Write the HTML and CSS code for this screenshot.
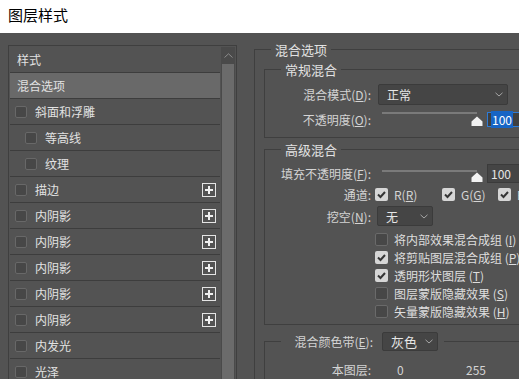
FILE: index.html
```html
<!DOCTYPE html>
<html>
    <head>
        <meta charset="utf-8">
        <title>图层样式</title>
        <link rel="stylesheet" href="styles.css">
    </head>
    <body>
        <div class="titlebar">图层样式</div>
        <div class="dialog">
            <!-- left: effect list -->
            <div class="stylelist">
                <div class="rows">
                    <div class="row head">样式</div>
                    <div class="row selected">混合选项</div>
                    <div class="row"><span class="box"></span>斜面和浮雕</div>
                    <div class="row sub"><span class="box"></span>等高线</div>
                    <div class="row sub"><span class="box"></span>纹理</div>
                    <div class="row"><span class="box"></span>描边<svg class="plus" width="14" height="14" viewBox="0 0 14 14"><rect x="0.5" y="0.5" width="13" height="13" fill="none" stroke="#e4e4e4"/><path d="M7 3v8M3 7h8" stroke="#f0f0f0" stroke-width="2"/></svg></div>
                    <div class="row"><span class="box"></span>内阴影<svg class="plus" width="14" height="14" viewBox="0 0 14 14"><rect x="0.5" y="0.5" width="13" height="13" fill="none" stroke="#e4e4e4"/><path d="M7 3v8M3 7h8" stroke="#f0f0f0" stroke-width="2"/></svg></div>
                    <div class="row"><span class="box"></span>内阴影<svg class="plus" width="14" height="14" viewBox="0 0 14 14"><rect x="0.5" y="0.5" width="13" height="13" fill="none" stroke="#e4e4e4"/><path d="M7 3v8M3 7h8" stroke="#f0f0f0" stroke-width="2"/></svg></div>
                    <div class="row"><span class="box"></span>内阴影<svg class="plus" width="14" height="14" viewBox="0 0 14 14"><rect x="0.5" y="0.5" width="13" height="13" fill="none" stroke="#e4e4e4"/><path d="M7 3v8M3 7h8" stroke="#f0f0f0" stroke-width="2"/></svg></div>
                    <div class="row"><span class="box"></span>内阴影<svg class="plus" width="14" height="14" viewBox="0 0 14 14"><rect x="0.5" y="0.5" width="13" height="13" fill="none" stroke="#e4e4e4"/><path d="M7 3v8M3 7h8" stroke="#f0f0f0" stroke-width="2"/></svg></div>
                    <div class="row"><span class="box"></span>内阴影<svg class="plus" width="14" height="14" viewBox="0 0 14 14"><rect x="0.5" y="0.5" width="13" height="13" fill="none" stroke="#e4e4e4"/><path d="M7 3v8M3 7h8" stroke="#f0f0f0" stroke-width="2"/></svg></div>
                    <div class="row"><span class="box"></span>内发光</div>
                    <div class="row"><span class="box"></span>光泽</div>
                    <div class="row"><span class="box"></span>颜色叠加</div>
                </div>
                <div class="scrollbar">
                    <div class="arrow"><svg width="9" height="5" viewBox="0 0 9 5"><path d="M0.5 4.5L4.5 0.8L8.5 4.5" fill="none" stroke="#8c8c8c"/></svg></div>
                    <div class="thumb"></div>
                </div>
            </div>

            <!-- right: blending options -->
            <fieldset class="group outer">
                <legend>混合选项</legend>

                <fieldset class="group inner normal">
                    <legend>常规混合</legend>
                    <div class="field mode">
                        <label>混合模式(<u>D</u>):</label>
                        <div class="select wide">正常<svg class="chev" width="8" height="5" viewBox="0 0 8 5"><path d="M0.5 0.8L4 4L7.5 0.8" fill="none" stroke="#a6a6a6"/></svg></div>
                    </div>
                    <div class="field opacity">
                        <label>不透明度(<u>O</u>):</label>
                        <div class="slider"><div class="track"></div><svg class="knob" width="12" height="10" viewBox="0 0 12 10"><path d="M6 0.5L11.5 5.5V10H0.5V5.5Z" fill="#f2f2f2"/></svg></div>
                        <div class="num focus"><span class="sel">100</span></div>
                    </div>
                </fieldset>

                <fieldset class="group inner advanced">
                    <legend>高级混合</legend>
                    <div class="field fill">
                        <label>填充不透明度(<u>F</u>):</label>
                        <div class="slider"><div class="track"></div><svg class="knob" width="12" height="10" viewBox="0 0 12 10"><path d="M6 0.5L11.5 5.5V10H0.5V5.5Z" fill="#f2f2f2"/></svg></div>
                        <div class="num">100</div>
                    </div>
                    <div class="field channels">
                        <label>通道:</label>
                        <div class="chan"><span class="check on"><svg width="13" height="13" viewBox="0 0 13 13"><path d="M3 6.5L5.5 9L10 4" fill="none" stroke="#353535" stroke-width="2"/></svg></span>R(<u>R</u>)</div>
                        <div class="chan"><span class="check on"><svg width="13" height="13" viewBox="0 0 13 13"><path d="M3 6.5L5.5 9L10 4" fill="none" stroke="#353535" stroke-width="2"/></svg></span>G(<u>G</u>)</div>
                        <div class="chan"><span class="check on"><svg width="13" height="13" viewBox="0 0 13 13"><path d="M3 6.5L5.5 9L10 4" fill="none" stroke="#353535" stroke-width="2"/></svg></span>B(<u>B</u>)</div>
                    </div>
                    <div class="field knockout">
                        <label>挖空(<u>N</u>):</label>
                        <div class="select small">无<svg class="chev" width="8" height="5" viewBox="0 0 8 5"><path d="M0.5 0.8L4 4L7.5 0.8" fill="none" stroke="#a6a6a6"/></svg></div>
                    </div>
                    <div class="checks">
                        <div class="opt"><span class="check"></span>将内部效果混合成组 (<u>I</u>)</div>
                        <div class="opt"><span class="check on"><svg width="13" height="13" viewBox="0 0 13 13"><path d="M3 6.5L5.5 9L10 4" fill="none" stroke="#353535" stroke-width="2"/></svg></span>将剪贴图层混合成组 (<u>P</u>)</div>
                        <div class="opt"><span class="check on"><svg width="13" height="13" viewBox="0 0 13 13"><path d="M3 6.5L5.5 9L10 4" fill="none" stroke="#353535" stroke-width="2"/></svg></span>透明形状图层 (<u>T</u>)</div>
                        <div class="opt"><span class="check"></span>图层蒙版隐藏效果 (<u>S</u>)</div>
                        <div class="opt"><span class="check"></span>矢量蒙版隐藏效果 (<u>H</u>)</div>
                    </div>
                </fieldset>

                <fieldset class="group inner band">
                    <legend class="bandlegend">
                        <label>混合颜色带(<u>E</u>):</label>
                        <div class="select tiny">灰色<svg class="chev" width="8" height="5" viewBox="0 0 8 5"><path d="M0.5 0.8L4 4L7.5 0.8" fill="none" stroke="#a6a6a6"/></svg></div>
                    </legend>
                    <div class="field layer">
                        <label>本图层:</label>
                        <span class="val first">0</span>
                        <span class="val">255</span>
                    </div>
                </fieldset>
            </fieldset>
        </div>
    </body>
</html>
```

FILE: styles.css
```css
body
{
    margin: 0;
    width: 519px;
    height: 379px;
    overflow: hidden;
    background-color: #535353;
    font-family: "Noto Sans CJK SC", "Microsoft YaHei", sans-serif;
    font-size: 12px;
    color: #d8d8d8;
}
.titlebar
{
    height: 33px;
    background-color: #ffffff;
    color: #000000;
    font-size: 15px;
    line-height: 30px;
    padding-left: 8px;
}
.dialog
{
    display: flex;
    align-items: flex-start;
    height: 346px;
    overflow: hidden;
}

/* left list */
.stylelist
{
    display: flex;
    width: 225px;
    height: 340px;
    margin: 12px 0 0 8px;
    padding: 1px 1px 0 1px;
    border: 1px solid #3f3f3f;
    flex-shrink: 0;
}
.rows
{
    width: 210px;
    overflow: hidden;
}
.row
{
    display: flex;
    align-items: center;
    height: 25px;
    border-bottom: 1px solid #3d3d3d;
    padding-left: 5px;
    color: #e2e2e2;
}
.row.head, .row.selected
{
    padding-left: 7px;
}
.row.selected
{
    background-color: #696969;
}
.row.sub
{
    padding-left: 15px;
}
.box
{
    width: 10px;
    height: 10px;
    border: 1px solid #686868;
    border-radius: 2px;
    background-color: #474747;
    margin-right: 8px;
}
.plus
{
    margin-left: auto;
    margin-right: 4px;
}
.scrollbar
{
    width: 14px;
    margin-left: 1px;
    background-color: #4a4a4a;
}
.arrow
{
    height: 17px;
    display: flex;
    justify-content: center;
    align-items: center;
}
.thumb
{
    margin: 0 1px;
    height: 330px;
    background-color: #6b6b6b;
}

/* right options */
.group
{
    margin: 0;
    padding: 0;
    border: 1px solid #3f3f3f;
    min-width: 0;
}
.group legend
{
    margin-left: 16px;
    padding: 0 4px;
    font-size: 13px;
    line-height: 17px;
    color: #e2e2e2;
}
.outer
{
    width: 300px;
    margin: 8px 0 0 17px;
    padding-bottom: 30px;
    flex-shrink: 0;
}
.inner
{
    margin-left: 9px;
    border-right: none;
}
.normal
{
    margin-top: 3px;
    padding: 6px 0 9px 0;
}
.advanced
{
    margin-top: 3px;
    padding: 6px 0 4px 0;
}
.band
{
    margin-top: 7px;
    padding-bottom: 20px;
}
.field
{
    display: flex;
    align-items: center;
}
.field label, .bandlegend label
{
    width: 106px;
    margin-right: 4px;
    text-align: right;
    color: #d4d4d4;
    font-size: 12px;
}
.mode
{
    height: 21px;
}
.opacity
{
    height: 18px;
    margin-top: 5px;
}
.fill
{
    height: 19px;
}
.channels
{
    height: 17px;
    margin-top: 3px;
}
.knockout
{
    height: 20px;
    margin-top: 3px;
}
.select
{
    display: flex;
    align-items: center;
    box-sizing: border-box;
    padding-left: 8px;
    background-color: #454545;
    border: 1px solid #3b3b3b;
    border-radius: 2px;
    color: #e6e6e6;
}
.chev
{
    margin-left: auto;
    margin-right: 4px;
}
.select.wide
{
    width: 130px;
    height: 21px;
    margin-left: 3px;
}
.select.small
{
    width: 56px;
    height: 20px;
    margin-left: 2px;
}
.select.tiny
{
    width: 56px;
    height: 19px;
}
.slider
{
    position: relative;
    width: 105px;
    height: 18px;
    margin-left: 7px;
}
.track
{
    width: 95px;
    height: 2px;
    margin-top: 2px;
    background-color: #7a7a7a;
}
.knob
{
    position: absolute;
    left: 89px;
    top: 6px;
}
.fill .track
{
    margin-top: 5px;
}
.fill .knob
{
    top: 7px;
}
.num
{
    box-sizing: border-box;
    width: 40px;
    height: 19px;
    padding-left: 3px;
    line-height: 17px;
    background-color: #454545;
    border: 1px solid #3b3b3b;
    color: #e6e6e6;
}
.num.focus
{
    height: 15px;
    line-height: 13px;
    border-color: #2e7bd6;
    background-color: #3f3f3f;
}
.sel
{
    background-color: #1765c5;
    color: #ffffff;
    padding: 0 1px;
}
.channels
{
    display: grid;
    grid-template-columns: 110px 67px 56px auto;
    column-gap: 0;
}
.channels label
{
    margin-right: 0;
    width: 106px;
}
.chan
{
    display: flex;
    align-items: center;
    color: #d4d4d4;
}
.check
{
    box-sizing: border-box;
    width: 13px;
    height: 13px;
    border: 1px solid #6a6a6a;
    border-radius: 2px;
    background-color: #474747;
    margin-right: 6px;
    flex-shrink: 0;
}
.check.on
{
    border: none;
    background-color: #d6d6d6;
}
.check svg
{
    display: block;
}
.checks
{
    margin: 4px 0 0 110px;
}
.opt
{
    display: flex;
    align-items: center;
    height: 18px;
    font-size: 12px;
    color: #dedede;
    white-space: nowrap;
}
.group legend.bandlegend
{
    display: flex;
    align-items: center;
    height: 19px;
    padding: 0 6px 0 4px;
}
.bandlegend label
{
    width: 88px;
    margin-right: 9px;
}
.layer
{
    height: 18px;
    margin-top: 9px;
}
.val
{
    color: #d4d4d4;
}
.val.first
{
    width: 69px;
    margin-left: 22px;
}
```
